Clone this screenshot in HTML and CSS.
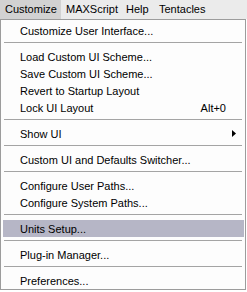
FILE: index.html
```html
<!DOCTYPE html>
<html>
<head>
<meta charset="utf-8">
<link rel="stylesheet" href="styles.css">
</head>
<body>
<div class="bar">
  <div class="tab tab-customize active">Customize</div>
  <div class="tab tab-max">MAXScript</div>
  <div class="tab tab-help">Help</div>
  <div class="tab tab-tent">Tentacles</div>
</div>
<div class="menu">
  <div class="item"><span class="label">Customize User Interface...</span></div>
  <div class="sep"></div>
  <div class="item"><span class="label">Load Custom UI Scheme...</span></div>
  <div class="item"><span class="label">Save Custom UI Scheme...</span></div>
  <div class="item"><span class="label">Revert to Startup Layout</span></div>
  <div class="item"><span class="label">Lock UI Layout</span><span class="shortcut">Alt+0</span></div>
  <div class="sep"></div>
  <div class="item"><span class="label">Show UI</span><svg class="arrow" width="4" height="7" viewBox="0 0 4 7"><path d="M0 0 L4 3.5 L0 7 Z" fill="#000"/></svg></div>
  <div class="sep"></div>
  <div class="item"><span class="label">Custom UI and Defaults Switcher...</span></div>
  <div class="sep"></div>
  <div class="item"><span class="label">Configure User Paths...</span></div>
  <div class="item"><span class="label">Configure System Paths...</span></div>
  <div class="sep"></div>
  <div class="item selected"><span class="label">Units Setup...</span></div>
  <div class="sep"></div>
  <div class="item"><span class="label">Plug-in Manager...</span></div>
  <div class="sep"></div>
  <div class="item"><span class="label">Preferences...</span></div>
</div>
</body>
</html>
```
FILE: styles.css
```css
html, body {
  margin: 0;
  padding: 0;
  background: #ffffff;
}
body {
  font-family: "Liberation Sans", Arial, sans-serif;
  font-size: 11px;
  color: #000;
  width: 247px;
}
.bar {
  display: flex;
  height: 19px;
  background: #ebebeb;
}
.tab {
  box-sizing: border-box;
  height: 19px;
  line-height: 19px;
  padding-left: 5px;
  white-space: nowrap;
}
.tab-customize { width: 61px; }
.tab-max { width: 60px; }
.tab-help { width: 33px; }
.tab-tent { flex: 1; }
.tab.active { background: #d2d2d2; }
.menu {
  box-sizing: border-box;
  width: 246px;
  border: 1px solid #9c9c9c;
  background: #fdfdfd;
  padding: 2px 1px 0 2px;
}
.item {
  display: flex;
  align-items: center;
  height: 17px;
  padding: 0 18px 0 17px;
  white-space: nowrap;
}
.item .label { flex: 1; }
.item.selected { background: #b6b6c6; }
.arrow { margin-right: -10px; }
.sep {
  height: 1px;
  margin: 3px 2px 5px 1px;
  background: #a4a4a4;
}
```
